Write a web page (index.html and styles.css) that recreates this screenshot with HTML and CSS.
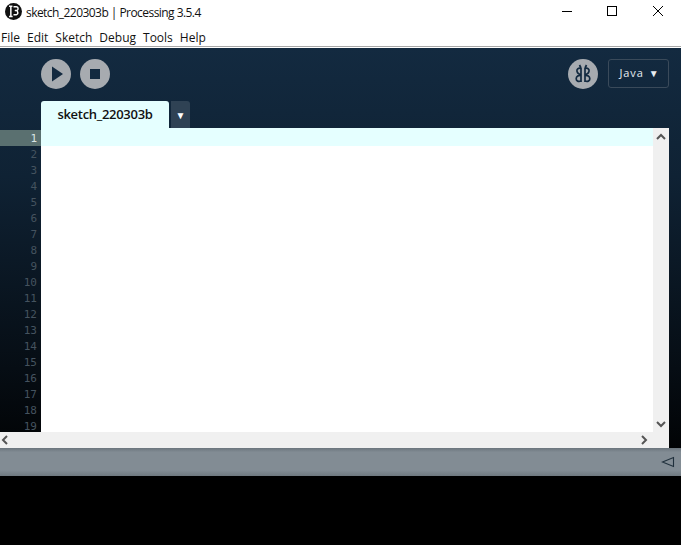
FILE: index.html
```html
<!DOCTYPE html>
<html lang="en">
<head>
<meta charset="utf-8">
<title>sketch_220303b | Processing 3.5.4</title>
<link rel="stylesheet" href="styles.css">
</head>
<body>
<div class="window">
  <header class="titlebar">
    <svg class="app-icon" width="17" height="17" viewBox="0 0 16 16"><circle cx="8" cy="8" r="8" fill="#111"/><path d="M5.500 3V12.500M3.800 3H7M3.800 12.800H7.200" stroke="#fff" stroke-width="1.400" fill="none"/><path d="M8 3.500h2.500a1.700 1.700 0 0 1 0 3.600H9.300a1.900 1.900 0 0 1 1.300 4H8" stroke="#fff" stroke-width="1.300" fill="none"/></svg>
    <span class="title">sketch_220303b | Processing 3.5.4</span>
    <div class="win-controls">
      <svg class="win-btn" width="46" height="24" viewBox="0 0 46 24"><path d="M19 11.500h10" stroke="#000"/></svg>
      <svg class="win-btn" width="46" height="24" viewBox="0 0 46 24"><rect x="18.500" y="6.500" width="9" height="9" fill="none" stroke="#000"/></svg>
      <svg class="win-btn" width="46" height="24" viewBox="0 0 46 24"><path d="M18 6l10 10M28 6L18 16" stroke="#000" fill="none"/></svg>
    </div>
  </header>
  <nav class="menubar">
    <span>File</span><span>Edit</span><span>Sketch</span><span>Debug</span><span>Tools</span><span>Help</span>
  </nav>
  <main class="ide">
    <div class="toolbar">
      <button class="round"><svg width="30" height="30" viewBox="0 0 30 30"><path d="M11 7.500L22 15 11 22.500Z" fill="#132a40"/></svg></button>
      <button class="round"><svg width="30" height="30" viewBox="0 0 30 30"><rect x="10" y="10" width="10" height="10" fill="#132a40"/></svg></button>
      <div class="spacer"></div>
      <button class="round"><svg width="30" height="30" viewBox="0 0 30 30" fill="none" stroke="#132a40" stroke-width="1.700"><path d="M11.500 6l1.500 3M18.500 6L17 9"/><path d="M13 9v14M17 9v14"/><path d="M13 9.200c-3-.7-4.500 1.300-4 3.200S11.500 15.500 13 15.500M17 9.200c3-.7 4.500 1.300 4 3.200S18.500 15.500 17 15.500"/><path d="M13 16.500c-2.500-.3-4.800.8-4.800 3.200S10.500 23 13 22M17 16.500c2.500-.3 4.800.8 4.800 3.200S19.500 23 17 22"/></svg></button>
      <div class="mode">Java <span class="caret">▼</span></div>
    </div>
    <div class="tabs">
      <div class="tab">sketch_220303b</div>
      <div class="tab-menu">▼</div>
    </div>
    <div class="editor">
      <div class="gutter">
        <div class="num current">1</div><div class="num">2</div><div class="num">3</div><div class="num">4</div><div class="num">5</div><div class="num">6</div><div class="num">7</div><div class="num">8</div><div class="num">9</div><div class="num">10</div><div class="num">11</div><div class="num">12</div><div class="num">13</div><div class="num">14</div><div class="num">15</div><div class="num">16</div><div class="num">17</div><div class="num">18</div><div class="num">19</div>
      </div>
      <div class="code"><div class="current-line"></div></div>
      <div class="vscroll">
        <svg width="16" height="16" viewBox="0 0 16 16"><path d="M4 11l4-4 4 4" fill="none" stroke="#555" stroke-width="2"/></svg>
        <svg width="16" height="16" viewBox="0 0 16 16"><path d="M4 6l4 4 4-4" fill="none" stroke="#555" stroke-width="2"/></svg>
      </div>
    </div>
    <div class="hscroll-row">
      <div class="hscroll">
        <svg width="16" height="16" viewBox="0 0 16 16"><path d="M7 4L3 8l4 4" fill="none" stroke="#555" stroke-width="2"/></svg>
        <svg width="16" height="16" viewBox="0 0 16 16"><path d="M5 4l4 4-4 4" fill="none" stroke="#555" stroke-width="2"/></svg>
      </div>
    </div>
    <div class="status">
      <svg width="14" height="12" viewBox="0 0 14 12"><path d="M12.500 1.500V10.500L1.500 6Z" fill="none" stroke="#20303c" stroke-width="1.100"/></svg>
    </div>
  </main>
  <div class="console"></div>
</div>
</body>
</html>
```
FILE: styles.css
```css
* { box-sizing: border-box; }
html, body { margin: 0; padding: 0; }
body { width: 681px; height: 545px; overflow: hidden; background: #000; }
.window { display: flex; flex-direction: column; height: 545px; font-family: "Open Sans", "Noto Sans", sans-serif; }
.titlebar { height: 24px; background: #fff; display: flex; align-items: center; padding-left: 5px; flex: none; }
.app-icon { flex: none; margin-bottom: 1px; }
.title { margin-left: 4px; font-size: 12px; color: #111; letter-spacing: -0.55px; }
.win-controls { margin-left: auto; display: flex; }
.win-btn { display: block; }
.menubar { height: 24px; flex: none; background: #fff; box-shadow: inset 0 -1px #fff, inset 0 -2px #a8a8a8; display: flex; align-items: center; gap: 7px; padding: 2px 0 0 1px; font-size: 12px; color: #111; }
.ide { flex: 1; display: flex; flex-direction: column; background: linear-gradient(#132a40, #0f2234 30%, #060d14 75%, #000 100%); }
.toolbar { height: 53px; flex: none; display: flex; align-items: flex-start; padding: 11px 12px 0 41px; gap: 9px; }
.spacer { flex: 1; }
.round { width: 30px; height: 30px; border-radius: 50%; background: #a7abb0; border: 0; padding: 0; display: block; }
.round svg { display: block; }
.mode { width: 61px; height: 29px; border: 1px solid #3a4a5a; border-radius: 3px; margin-left: 1px; color: #e8ecf0; font-size: 11px; display: flex; align-items: center; justify-content: center; gap: 5px; letter-spacing: .9px; padding: 0 0 2px 2px; }
.caret { font-size: 10px; }
.tabs { height: 27px; flex: none; display: flex; padding-left: 41px; gap: 2px; }
.tab { width: 128px; background: #e5ffff; border-radius: 3px 3px 0 0; font-size: 13px; font-weight: 600; color: #111; display: flex; align-items: center; justify-content: center; padding-bottom: 1px; letter-spacing: -0.3px; }
.tab-menu { width: 19px; background: #2f4254; border-radius: 0 3px 0 0; color: #fff; font-size: 10px; display: flex; align-items: center; justify-content: center; }
.editor { height: 304px; flex: none; display: flex; padding-right: 12px; overflow: hidden; }
.gutter { width: 41px; flex: none; padding-top: 2px; height: 303px; overflow: hidden; }
.num { height: 16px; line-height: 18px; text-align: right; padding-right: 4px; font-family: "DejaVu Sans Mono", monospace; font-size: 11px; color: #45535f; }
.num.current { background: #5a7070; color: #d8e4e4; }
.code { flex: 1; background: #fff; }
.current-line { height: 18px; background: #e5ffff; }
.vscroll { width: 16px; flex: none; background: #f0f0f0; display: flex; flex-direction: column; justify-content: space-between; }
.vscroll svg, .hscroll svg { display: block; }
.hscroll-row { height: 16px; flex: none; padding-right: 12px; }
.hscroll { height: 16px; background: #f0f0f0; display: flex; justify-content: space-between; padding-right: 16px; }
.status { height: 28px; flex: none; background: linear-gradient(#6b757d, #828c94 15%, #828c94 80%, #6f7980); display: flex; align-items: center; justify-content: flex-end; padding-right: 6px; }
.console { height: 69px; flex: none; background: #000; }
```
